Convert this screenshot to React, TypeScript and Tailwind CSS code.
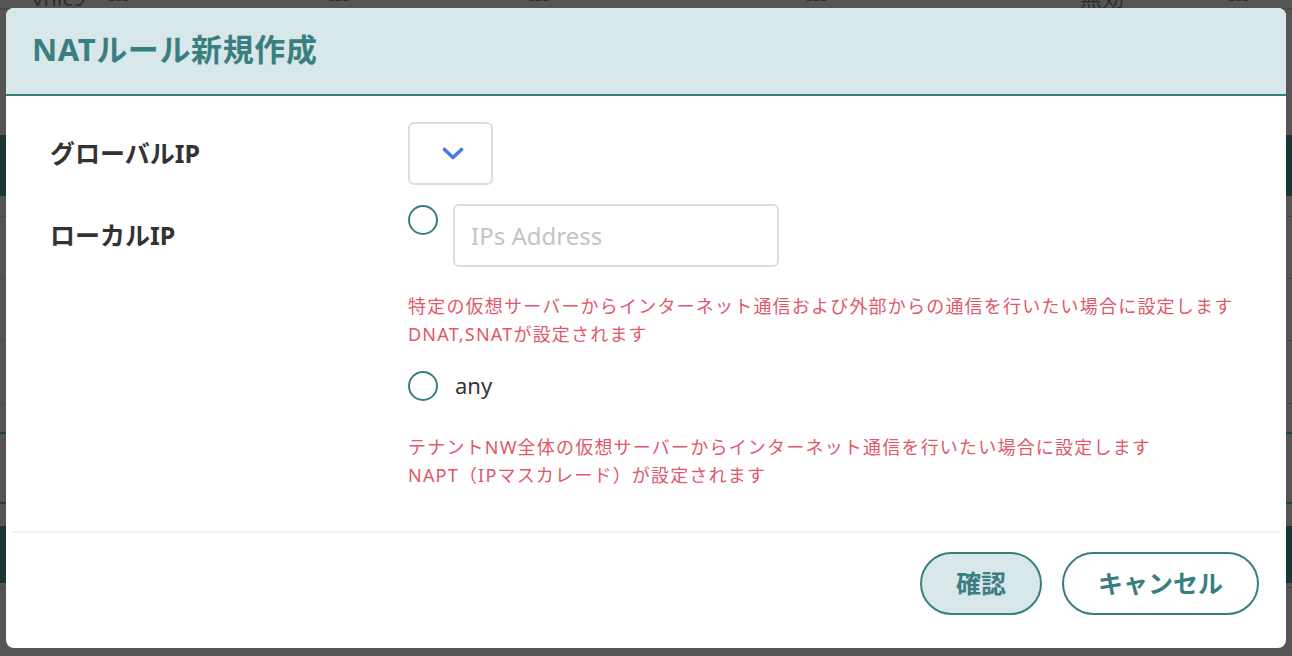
import React from 'react'

const font = { fontFamily: '"Noto Sans", "Noto Sans CJK JP", sans-serif' }

// 背景のテーブル（オーバーレイで暗くなった状態）
const BackgroundTable = () => {
  return (
    <div className="w-full h-[656px] bg-[#555555] overflow-hidden">
      <div className="-mt-[22px] h-[30px] flex items-end text-[#2e2e2e] text-[22px] leading-none">
        <span className="w-[108px] pl-[32px]">vnic9</span>
        <span className="w-[220px]">---</span>
        <span className="w-[200px]">---</span>
        <span className="w-[278px]">---</span>
        <span className="w-[274px]">---</span>
        <span className="w-[148px]">無効</span>
        <span>---</span>
      </div>
      <div className="h-[2px] bg-[#4a4a4a]" />
      <div className="h-[125px]" />
      <div className="h-[61px] bg-[#1b3636]" />
      <div className="h-[20px]" />
      <div className="h-[1px] bg-[#4a4a4a]" />
      <div className="h-[61px]" />
      <div className="h-[1px] bg-[#4a4a4a]" />
      <div className="h-[61px]" />
      <div className="h-[1px] bg-[#4a4a4a]" />
      <div className="h-[62px]" />
      <div className="h-[1px] bg-[#4a4a4a]" />
      <div className="h-[28px]" />
      <div className="h-[2px] bg-[#1f4444]" />
      <div className="h-[68px]" />
      <div className="h-[2px] bg-[#1f4444]" />
      <div className="h-[22px]" />
      <div className="h-[57px] bg-[#1b3636]" />
      <div className="h-[4px]" />
      <div className="h-[1px] bg-[#4a4a4a]" />
    </div>
  )
}

const Radio = () => (
  <span className="block w-[30px] h-[30px] rounded-full border-2 border-[#3a7f80] bg-white shrink-0" />
)

const App = () => {
  return (
    <div className="relative w-full h-[656px] overflow-hidden" style={font}>
      <BackgroundTable />

      {/* モーダル */}
      <div className="absolute left-[6px] top-[8px] w-[1280px] h-[640px] bg-white rounded-[8px] overflow-hidden flex flex-col">
        {/* ヘッダー */}
        <div className="h-[88px] shrink-0 bg-[#d8e7ea] border-b-2 border-[#3a7f80] flex items-center pl-[26px] pb-[3px]">
          <h1 className="text-[31px] font-bold text-[#3a7f80] tracking-[0.02em] leading-none">
            NATルール新規作成
          </h1>
        </div>

        {/* 本文 */}
        <div className="flex-1 px-[44px] pt-[26px]">
          <div className="grid grid-cols-[358px_1fr]">
            <div className="h-[63px] flex items-center text-[25px] font-bold text-[#333333]">
              グローバルIP
            </div>
            <div>
              <div className="w-[85px] h-[63px] border-2 border-[#dddddd] rounded-[6px] flex items-center justify-center pl-[4px]">
                <svg width="22" height="13" viewBox="0 0 22 13" fill="none">
                  <path d="M2.5 2.5 L11 10.5 L19.5 2.5" stroke="#4a7bd9" strokeWidth="3.6" strokeLinecap="round" strokeLinejoin="round" />
                </svg>
              </div>
            </div>

            <div className="mt-[19px] h-[63px] flex items-center text-[25px] font-bold text-[#333333]">
              ローカルIP
            </div>
            <div className="mt-[19px]">
              <div className="flex items-start gap-[15px]">
                <div className="pt-[1px]">
                  <Radio />
                </div>
                <div className="w-[326px] h-[63px] border-2 border-[#dddddd] rounded-[6px] flex items-center px-[16px]">
                  <span className="text-[24px] text-[#c4c4c4]">IPs Address</span>
                </div>
              </div>

              <div className="mt-[25px] text-[18px] leading-[28px] tracking-[1.2px] text-[#e0586c]">
                <p>特定の仮想サーバーからインターネット通信および外部からの通信を行いたい場合に設定します</p>
                <p>DNAT,SNATが設定されます</p>
              </div>

              <div className="mt-[21px] flex items-center gap-[17px]">
                <Radio />
                <span className="text-[22px] text-[#333333]">any</span>
              </div>

              <div className="mt-[31px] text-[18px] leading-[28px] tracking-[1.2px] text-[#e0586c]">
                <p>テナントNW全体の仮想サーバーからインターネット通信を行いたい場合に設定します</p>
                <p>NAPT（IPマスカレード）が設定されます</p>
              </div>
            </div>
          </div>
        </div>

        {/* フッター */}
        <div className="mx-[6px] h-[2px] bg-[#f2f2f2]" />
        <div className="h-[115px] shrink-0 flex items-start justify-end gap-[20px] pt-[19px] pr-[27px]">
          <button className="w-[122px] h-[63px] rounded-full border-2 border-[#3a7f80] bg-[#d8e7ea] text-[25px] font-bold text-[#3a7f80]">
            確認
          </button>
          <button className="w-[197px] h-[63px] rounded-full border-2 border-[#3a7f80] bg-white text-[25px] font-bold text-[#3a7f80]">
            キャンセル
          </button>
        </div>
      </div>
    </div>
  )
}

export default App
